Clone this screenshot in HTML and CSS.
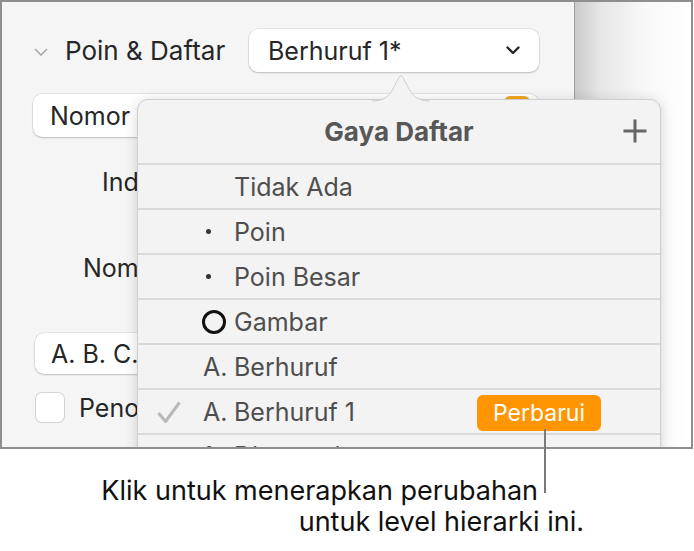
FILE: index.html
```html
<!DOCTYPE html>
<html lang="id">
<head>
<meta charset="utf-8">
<title>Gaya Daftar</title>
<link rel="stylesheet" href="styles.css">
</head>
<body>
<div class="frame">
  <div class="panel">
    <div class="row-head">
      <svg class="disclose" width="14" height="8" viewBox="0 0 14 8"><polyline points="1,1 7,7 13,1" fill="none" stroke="#a8a8a8" stroke-width="1.6"/></svg>
      <span class="head-label">Poin &amp; Daftar</span>
      <div class="popup">
        <span>Berhuruf 1*</span>
        <svg width="14" height="9" viewBox="0 0 14 9"><polyline points="1.5,1.5 7,7 12.5,1.5" fill="none" stroke="#262626" stroke-width="2.4" stroke-linecap="round" stroke-linejoin="round"/></svg>
      </div>
    </div>
    <div class="control wide">
      <span>Nomor</span>
      <span class="well"></span>
    </div>
    <div class="label indent">Indentasi</div>
    <div class="label start">Nomor Mulai</div>
    <div class="control abc"><span>A. B. C.</span></div>
    <div class="check-row">
      <span class="checkbox"></span>
      <span>Penomoran berlapis</span>
    </div>
  </div>
  <div class="strip"></div>

  <div class="popover">
    <svg class="arrow" width="58" height="28" viewBox="0 0 58 28">
      <path d="M0 27 C12 27 17 22 21 15 L27 3.5 Q29 0 31 3.5 L37 15 C41 22 46 27 58 27 L58 28 L0 28 Z" fill="#f3f3f3"/>
      <path d="M0 27 C12 27 17 22 21 15 L27 3.5 Q29 0 31 3.5 L37 15 C41 22 46 27 58 27" fill="none" stroke="#cfcfcf" stroke-width="1"/>
    </svg>
    <div class="pop-head">
      <span class="pop-title">Gaya Daftar</span>
      <svg class="plus" width="26" height="26" viewBox="0 0 26 26"><path d="M13 1.5 V24.5 M1.5 13 H24.5" stroke="#666" stroke-width="3" fill="none"/></svg>
    </div>
    <div class="item"><span class="tick"></span><span class="mark"></span><span class="name">Tidak Ada</span></div>
    <div class="item"><span class="tick"></span><span class="mark"><i class="dot"></i></span><span class="name">Poin</span></div>
    <div class="item"><span class="tick"></span><span class="mark"><i class="dot"></i></span><span class="name">Poin Besar</span></div>
    <div class="item"><span class="tick"></span><span class="mark"><i class="ring"></i></span><span class="name">Gambar</span></div>
    <div class="item"><span class="tick"></span><span class="mark">A.</span><span class="name">Berhuruf</span></div>
    <div class="item"><span class="tick"><svg width="24" height="23" viewBox="0 0 24 23"><polyline points="1.5,12 8.5,20.5 22.5,1.5" fill="none" stroke="#b9b9b9" stroke-width="3" stroke-linejoin="round"/></svg></span><span class="mark">A.</span><span class="name">Berhuruf 1</span><span class="update">Perbarui</span></div>
    <div class="item last"><span class="tick"></span><span class="mark">1.</span><span class="name">Dinomori</span></div>
  </div>
</div>
<div class="callout-line"></div>
<div class="callout">
  <div class="c1">Klik untuk menerapkan perubahan</div>
  <div class="c2">untuk level hierarki ini.</div>
</div>
</body>
</html>
```

FILE: styles.css
```css
* { box-sizing: border-box; }
html, body { margin: 0; padding: 0; background: #fff; }
body {
  width: 694px;
  height: 551px;
  overflow: hidden;
  position: relative;
  font-family: Inter, "Noto Sans", sans-serif;
  color: #111;
}

.frame {
  position: relative;
  width: 693px;
  height: 449px;
  border: 2px solid #8e8e8e;
  display: flex;
  overflow: hidden;
}

.panel {
  width: 573px;
  flex: none;
  background: #f5f5f5;
  border-right: 1.5px solid #9d9d9d;
  padding: 27px 35px 0 31px;
  display: flex;
  flex-direction: column;
  color: #262626;
  font-size: 25px;
}

.strip {
  flex: 1;
  background: linear-gradient(90deg, #cbcbcb 0, #e6e6e6 25px, #f8f8f8 70px, #fff 100%);
}

.row-head {
  display: flex;
  align-items: center;
  height: 43px;
}
.disclose { margin: 2px 0 0 1px; }
.head-label { margin-left: 17px; font-size: 26px; }

.popup {
  margin-left: auto;
  width: 290px;
  height: 43px;
  background: #fff;
  border-radius: 9px;
  box-shadow: 0 0 0 0.5px rgba(0,0,0,0.12), 0 1px 2px rgba(0,0,0,0.18);
  display: flex;
  align-items: center;
  justify-content: space-between;
  padding: 0 19px 0 19px;
}

.control {
  background: #fff;
  border-radius: 9px;
  box-shadow: 0 0 0 0.5px rgba(0,0,0,0.12), 0 1px 2px rgba(0,0,0,0.18);
  display: flex;
  align-items: center;
}
.wide {
  margin-top: 22px;
  height: 43px;
  padding-left: 17px;
  padding-right: 9px;
}
.well {
  margin-left: auto;
  align-self: flex-start;
  margin-top: 2px;
  width: 26px;
  height: 36px;
  border-radius: 6px;
  background: #f5a623;
}

.label { height: 30px; line-height: 30px; white-space: nowrap; }
.indent { margin-top: 30px; padding-left: 69px; }
.start { margin-top: 56px; padding-left: 50px; }

.abc {
  margin-top: 50px;
  margin-left: 2px;
  height: 41px;
  width: 300px;
  padding-left: 16px;
}

.check-row {
  margin-top: 19px;
  display: flex;
  align-items: center;
  height: 29px;
  white-space: nowrap;
}
.checkbox {
  width: 28px;
  height: 29px;
  margin-left: 3px;
  border-radius: 6px;
  background: #fff;
  box-shadow: 0 0 0 1px #d4d4d4, 0 1px 1px rgba(0,0,0,0.08);
  margin-right: 15px;
}

/* popover (overlay) */
.popover {
  position: absolute;
  left: 135px;
  top: 97px;
  width: 524px;
  height: 420px;
  background: #f3f3f3;
  border: 1px solid #cfcfcf;
  border-radius: 11px;
  box-shadow: 0 2px 14px rgba(0,0,0,0.16);
  color: #4e4e4e;
  font-size: 25px;
}
.arrow {
  position: absolute;
  left: 234px;
  top: -26px;
}
.pop-head {
  position: relative;
  height: 63px;
  display: flex;
  align-items: center;
  justify-content: center;
}
.pop-title {
  font-weight: 700;
  color: #575757;
  font-size: 26px;
}
.plus {
  position: absolute;
  right: 12px;
  top: 18px;
}

.item {
  height: 45px;
  border-top: 2px solid #dadada;
  display: flex;
  align-items: center;
  white-space: nowrap;
}
.item.last { align-items: flex-start; padding-top: 6px; }
.tick {
  width: 65px;
  padding-left: 19px;
  display: flex;
  align-items: center;
}
.tick svg { margin-top: 2px; }
.mark {
  width: 31px;
  display: flex;
  align-items: center;
}
.dot {
  display: block;
  width: 5px;
  height: 5px;
  border-radius: 50%;
  background: #333;
  margin-left: 3px;
}
.ring {
  display: block;
  width: 24px;
  height: 24px;
  border-radius: 50%;
  border: 3px solid #111;
  margin-left: -1px;
}
.update {
  margin-left: auto;
  margin-right: 59px;
  width: 124px;
  height: 36px;
  border-radius: 6px;
  background: #ff9500;
  color: #fff;
  font-size: 23px;
  display: flex;
  align-items: center;
  justify-content: center;
  margin-top: 3px;
}

/* callout annotation */
.callout-line {
  position: absolute;
  left: 544px;
  top: 429px;
  width: 2px;
  height: 64px;
  background: #7a7a7a;
}
.callout {
  width: 584px;
  margin-top: 26px;
  text-align: right;
  font-size: 27px;
  line-height: 31px;
  color: #111;
}
.c1 { padding-right: 46px; }
```
